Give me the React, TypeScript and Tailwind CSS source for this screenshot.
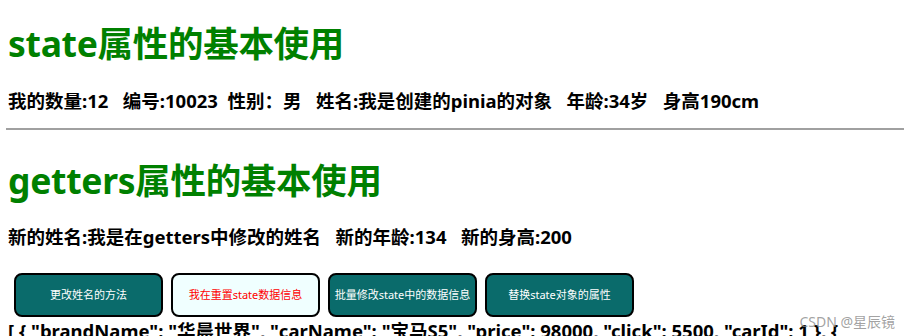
import React from 'react';

const cars = [
  { brandName: '华晨世界', carName: '宝马S5', price: 98000, click: 5500, carId: 1 },
  { brandName: '华晨世界', carName: '宝马X3', price: 380000, click: 2500, carId: 2 },
];

export default function App() {
  const font = { fontFamily: '"Noto Sans", "Noto Sans CJK SC", sans-serif' };
  const json = '[ ' + cars.map((c) => JSON.stringify(c, null, 1).replace(/\s+/g, ' ')).join(', ') + ' ]';

  return (
    <div className="relative h-[336px] w-[910px] overflow-hidden bg-white text-black" style={font}>
      <div className="px-2">
        <h1 className="mt-[21px] text-[35.5px] font-bold leading-[44px] tracking-[-0.3px] text-[#008000]">state属性的基本使用</h1>
        <h3 className="mt-[23px] text-[18.5px] font-bold leading-[26px] whitespace-pre">
          我的数量:12{'   '}编号:10023{'  '}性别：男{'   '}姓名:我是创建的pinia的对象{'   '}年龄:34岁{'   '}身高190cm
        </h3>
      </div>
      <hr className="mx-[6px] mt-[14px] border-t-2 border-[#a0a0a0]" />
      <div className="px-2">
        <h1 className="mt-[28px] text-[35.5px] font-bold leading-[44px] tracking-[-0.3px] text-[#008000]">getters属性的基本使用</h1>
        <h3 className="mt-[22px] text-[18.5px] font-bold leading-[26px] whitespace-pre">
          新的姓名:我是在getters中修改的姓名{'   '}新的年龄:134{'   '}新的身高:200
        </h3>
      </div>
      <div className="mt-[23px] ml-[14px] flex gap-2">
        <button className="h-[44px] w-[149px] rounded-lg border-2 border-black bg-[#0a6b6b] text-[11px] text-white">更改姓名的方法</button>
        <button className="h-[44px] w-[149px] rounded-lg border-2 border-black bg-[#f0ffff] text-[11px] text-[#ff0000]">我在重置state数据信息</button>
        <button className="h-[44px] w-[149px] rounded-lg border-2 border-black bg-[#0a6b6b] text-[11px] text-white">批量修改state中的数据信息</button>
        <button className="h-[44px] w-[149px] rounded-lg border-2 border-black bg-[#0a6b6b] text-[11px] text-white">替换state对象的属性</button>
      </div>
      <div className="mt-[1px] px-2 text-[18.5px] font-bold leading-[26px]">{json}</div>
      <div className="absolute right-[15px] bottom-[4px] text-[14px] text-[#8a8a8a]/80">CSDN @星辰镜</div>
    </div>
  );
}
